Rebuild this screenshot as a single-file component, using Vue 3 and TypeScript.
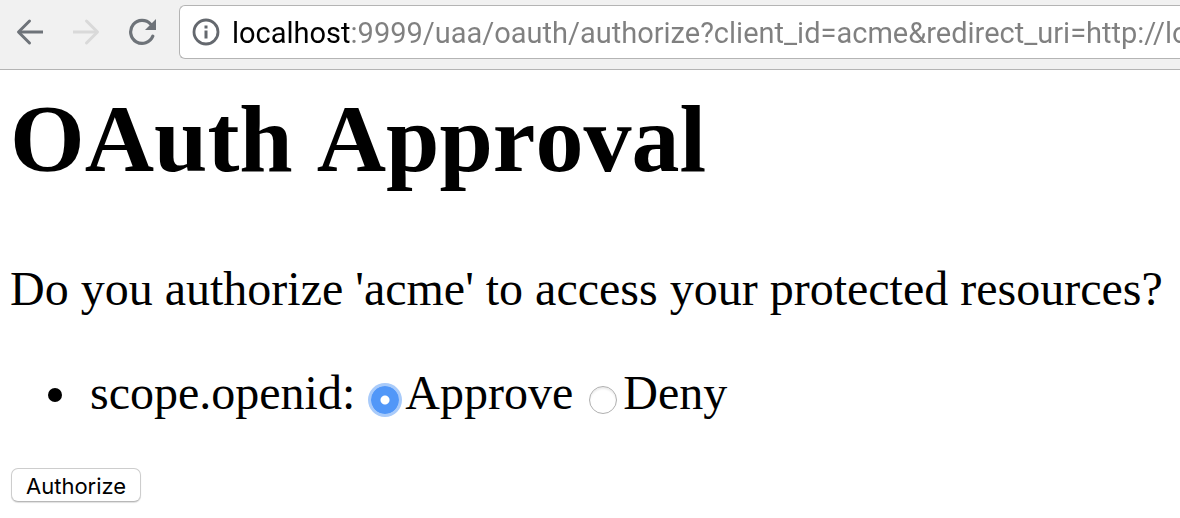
<script setup lang="ts">
import { ref } from 'vue'

const address = ref('localhost:9999/uaa/oauth/authorize?client_id=acme&redirect_uri=http://lo')
const decision = ref<'approve' | 'deny'>('approve')
</script>

<template>
  <div class="browser">
    <header class="toolbar">
      <button class="nav" type="button" aria-label="Back">
        <svg viewBox="0 0 28 28" fill="none" stroke="#6e7379" stroke-width="3" stroke-linecap="round" stroke-linejoin="round">
          <path d="M27 14H3" stroke-linecap="butt" />
          <path d="M13.5 3L2.5 14L13.5 25" />
        </svg>
      </button>
      <button class="nav" type="button" aria-label="Forward" disabled>
        <svg viewBox="0 0 28 28" fill="none" stroke="#d9d9d9" stroke-width="3" stroke-linecap="round" stroke-linejoin="round">
          <path d="M1 14H25" stroke-linecap="butt" />
          <path d="M14.5 3L25.5 14L14.5 25" />
        </svg>
      </button>
      <button class="nav" type="button" aria-label="Reload">
        <svg viewBox="0 0 28 28" fill="none">
          <path d="M22.7 6.2A11.5 11.5 0 1 0 24.8 18.2" stroke="#6e7379" stroke-width="3.2" stroke-linecap="round" />
          <path d="M28 1V12H17Z" fill="#6e7379" />
        </svg>
      </button>
      <div class="address">
        <svg class="info" viewBox="0 0 28 28" fill="none" aria-hidden="true">
          <circle cx="14" cy="14" r="12" stroke="#64686e" stroke-width="2.8" />
          <path d="M12.5 7.5h3v3h-3zM12.5 12.5h3v8h-3z" fill="#64686e" />
        </svg>
        <input v-model="address" class="url" type="text" aria-label="Address" spellcheck="false" />
      </div>
    </header>

    <main class="page">
      <h1>OAuth Approval</h1>
      <p>Do you authorize 'acme' to access your protected resources?</p>
      <form @submit.prevent>
        <ul>
          <li>
            scope.openid:
            <label><input v-model="decision" type="radio" name="scope.openid" value="approve" />Approve</label>{{ ' ' }}
            <label><input v-model="decision" type="radio" name="scope.openid" value="deny" />Deny</label>
          </li>
        </ul>
        <button class="authorize" type="submit">Authorize</button>
      </form>
    </main>
  </div>
</template>

<style>
body {
  margin: 0;
  background: #fff;
}
</style>

<style scoped>
.browser {
  overflow: hidden;
  color: #000;
}

.toolbar {
  display: flex;
  align-items: center;
  gap: 28px;
  padding: 5px 0 10px 16px;
  background: #f1f1f1;
  border-bottom: 1px solid #b4b4b4;
}

.nav {
  flex: none;
  width: 28px;
  height: 28px;
  padding: 0;
  border: 0;
  background: none;
}

.nav svg,
.info {
  display: block;
  width: 28px;
  height: 28px;
}

.address {
  flex: 1;
  display: flex;
  align-items: center;
  gap: 12px;
  min-width: 0;
  height: 52px;
  margin-left: -5px;
  padding-left: 12px;
  background: #fff;
  border: 1px solid #b4b4b4;
  border-right: 0;
  border-radius: 6px 0 0 6px;
}

.info {
  flex: none;
}

.url {
  flex: 1;
  min-width: 0;
  height: 40px;
  padding: 2px 0 0;
  border: 0;
  outline: 0;
  font: 29px/38px Roboto, "Liberation Sans", sans-serif;
  color: #808080;
  background: linear-gradient(to right, #000 118px, #808080 118px);
  -webkit-background-clip: text;
  background-clip: text;
  -webkit-text-fill-color: transparent;
}

.page {
  padding: 14px 10px;
  font: 48px/54px "Liberation Serif", "Times New Roman", serif;
}

h1 {
  margin: 0;
  font-size: 96px;
  line-height: 110px;
  font-kerning: none;
}

p {
  margin: 68px 0 50px;
  white-space: nowrap;
}

ul {
  margin: 0;
  padding-left: 38px;
  list-style: none;
}

li::before {
  content: "";
  display: inline-block;
  width: 14px;
  height: 14px;
  margin-right: 16px;
  vertical-align: 7px;
  border-radius: 50%;
  background: #000;
}

li label {
  white-space: nowrap;
}

input[type="radio"] {
  appearance: none;
  box-sizing: border-box;
  width: 28px;
  height: 28px;
  margin: 0 6px 0 4px;
  vertical-align: -5px;
  border: 1px solid #b0b0b0;
  border-radius: 50%;
  background: #fff;
  box-shadow: inset 0 2px 2px #ececec;
}

input[type="radio"]:checked {
  border: 0;
  background: radial-gradient(circle, #fff 4px, #5197f8 5px);
  box-shadow: 0 0 0 3px #a9cbfa;
}

.authorize {
  display: block;
  height: 34px;
  margin: 48px 0 0 1px;
  padding: 2px 14px 0;
  font: 22px/30px Inter, "Liberation Sans", sans-serif;
  color: #000;
  background: #fff;
  border: 1px solid #cdcdcd;
  border-bottom-color: #b8b8b8;
  border-radius: 7px;
  box-shadow: 0 1px 1px #e0e0e0;
}
</style>
